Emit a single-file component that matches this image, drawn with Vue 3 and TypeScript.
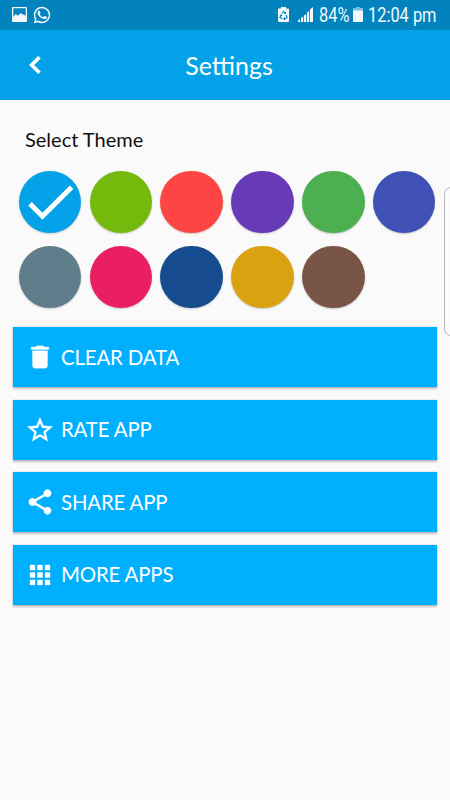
<script setup lang="ts">
import { ref } from 'vue'

interface Action {
  label: string
  path: string
}

const themes: string[] = [
  '#03a2e8', '#75b90d', '#ff4444', '#673ab7', '#4caf50', '#3f51b5',
  '#607d8b', '#e91e63', '#174b8f', '#daa210', '#795548',
]
const selected = ref(0)

const actions: Action[] = [
  { label: 'CLEAR DATA', path: 'M6 19c0 1.1.9 2 2 2h8c1.1 0 2-.9 2-2V7H6v12zM19 4h-3.5l-1-1h-5l-1 1H5v2h14V4z' },
  { label: 'RATE APP', path: 'M22 9.24l-7.19-.62L12 2 9.19 8.63 2 9.24l5.46 4.73L5.82 21 12 17.27 18.18 21l-1.63-7.03L22 9.24zM12 15.4l-3.76 2.27 1-4.28-3.32-2.88 4.38-.38L12 6.1l1.71 4.04 4.38.38-3.32 2.88 1 4.28L12 15.4z' },
  { label: 'SHARE APP', path: 'M18 16.08c-.76 0-1.44.3-1.96.77L8.91 12.7c.05-.23.09-.46.09-.7s-.04-.47-.09-.7l7.05-4.11c.54.5 1.25.81 2.04.81 1.66 0 3-1.34 3-3s-1.34-3-3-3-3 1.34-3 3c0 .24.04.47.09.7L8.04 9.81C7.5 9.31 6.79 9 6 9c-1.66 0-3 1.34-3 3s1.34 3 3 3c.79 0 1.5-.31 2.04-.81l7.12 4.16c-.05.21-.08.43-.08.65 0 1.61 1.31 2.92 2.92 2.92s2.92-1.31 2.92-2.92-1.31-2.92-2.92-2.92z' },
  { label: 'MORE APPS', path: 'M4 8h4V4H4v4zm6 12h4v-4h-4v4zm-6 0h4v-4H4v4zm0-6h4v-4H4v4zm6 0h4v-4h-4v4zm6-10v4h4V4h-4zm-6 4h4V4h-4v4zm6 6h4v-4h-4v4zm0 6h4v-4h-4v4z' },
]
</script>

<template>
  <div class="screen">
    <div class="status">
      <svg class="picture" viewBox="0 0 15 15">
        <path fill-rule="evenodd" d="M1 0h13a1 1 0 0 1 1 1v13a1 1 0 0 1-1 1H1a1 1 0 0 1-1-1V1a1 1 0 0 1 1-1zM1.3 1.3v8.4L3.8 7l2 1.8L9 6l1.8 2 1-1 1.9 2.5V1.3z" />
      </svg>
      <svg class="whatsapp" viewBox="0 0 24 24">
        <path d="M17.47 14.38c-.3-.15-1.76-.87-2.03-.97-.27-.1-.47-.15-.67.15-.2.3-.77.97-.94 1.16-.17.2-.35.22-.64.08-.3-.15-1.26-.46-2.39-1.48-.88-.79-1.48-1.76-1.65-2.06-.17-.3-.02-.46.13-.6.13-.14.3-.35.45-.52.15-.17.2-.3.3-.5.1-.2.05-.37-.03-.52-.07-.15-.67-1.61-.91-2.21-.24-.58-.49-.5-.67-.51h-.57c-.2 0-.52.07-.79.37-.27.3-1.04 1.02-1.04 2.48s1.07 2.88 1.21 3.07c.15.2 2.1 3.2 5.08 4.49 2.45.96 2.95.77 4.1.66.58-.1 1.76-.72 2-1.41.25-.7.25-1.29.18-1.42-.08-.12-.27-.2-.57-.34M12 1.1A10.9 10.9 0 0 0 2.6 17.5L1 23l5.7-1.5A10.9 10.9 0 1 0 12 1.1m0 2a8.9 8.9 0 1 1-4.9 16.3l-3.3.9.9-3.2A8.9 8.9 0 0 1 12 3.1" />
      </svg>
      <div class="status-right">
        <svg class="saver" viewBox="0 0 11 15">
          <path d="M3 0h5v1.5h2.2a.8.8 0 0 1 .8.8V14a1 1 0 0 1-1 1H1a1 1 0 0 1-1-1V2.3a.8.8 0 0 1 .8-.8H3z" />
          <path class="recycle" d="M3.8 6.5 5.5 4.5l1.7 2M8 8l1.2 2.2-1.7 1.6H6M4.5 11.8 1.9 10.5 3.1 8M6.1 6.5h1.3V5.1M7 10.6l-1.1 1.2L7 13M2 8.5l1.3-.6.6 1.2" />
        </svg>
        <svg class="signal" viewBox="0 0 15 15">
          <path d="M0 15v-1.5L2 12v3zM3 15v-4l2.2-1.5V15zM6 15V8.5L8.2 7v8zM9 15V5.5L11.2 4v11zM12 15V2.5L15 0v15z" />
        </svg>
        <span class="percent"><span class="narrow">84%</span></span>
        <svg class="battery" viewBox="0 0 10 15">
          <path opacity=".5" d="M3 0h4v1h3v3H0V1h3z" />
          <path d="M0 3.5h10V14a1 1 0 0 1-1 1H1a1 1 0 0 1-1-1z" />
        </svg>
        <span class="clock"><span class="narrow">12:04 pm</span></span>
      </div>
    </div>

    <header class="bar">
      <button class="back" aria-label="Back">
        <svg viewBox="0 0 12 18"><path d="M10.5 1.2 2.6 9l7.9 7.8" /></svg>
      </button>
      <h1>Settings</h1>
    </header>

    <main>
      <h2>Select Theme</h2>
      <div class="themes">
        <button
          v-for="(color, i) in themes"
          :key="color"
          class="swatch"
          :style="{ backgroundColor: color }"
          @click="selected = i"
        >
          <svg v-if="i === selected" viewBox="0 0 63 63"><path d="M11.1 33 23.6 45.5 53 16.3" /></svg>
        </button>
      </div>
      <div class="actions">
        <button v-for="a in actions" :key="a.label" class="action">
          <svg viewBox="0 0 24 24"><path :d="a.path" /></svg>
          <span>{{ a.label }}</span>
        </button>
      </div>
    </main>
    <div class="edge-handle"></div>
  </div>
</template>

<style>
body {
  margin: 0;
  background: #fafafa;
}
</style>

<style scoped>
.screen {
  position: relative;
  width: 450px;
  height: 800px;
  overflow: hidden;
  background: #fafafa;
  font-family: Lato, "Liberation Sans", sans-serif;
}
button {
  border: 0;
  padding: 0;
  font: inherit;
}
svg {
  display: block;
  flex: none;
}
.status {
  display: flex;
  align-items: center;
  box-sizing: border-box;
  height: 30px;
  padding: 0 13px 0 12px;
  background: #0283bd;
  color: #f2f9fd;
  font-family: Roboto, "Liberation Sans", sans-serif;
}
.status svg {
  fill: #f2f9fd;
}
.status .picture {
  width: 15px;
  height: 15px;
  margin-bottom: 1px;
}
.whatsapp {
  width: 18px;
  height: 18px;
  margin-left: 6px;
}
.status-right {
  display: flex;
  align-items: center;
  margin-left: auto;
}
.saver {
  width: 11px;
  height: 15px;
  margin-bottom: 1px;
}
.saver .recycle {
  fill: none;
  stroke: #0283bd;
  stroke-width: 1.1;
}
.signal {
  width: 15px;
  height: 15px;
  margin: 0 0 1px 9px;
}
.percent,
.clock {
  display: block;
  font-size: 20px;
  line-height: 30px;
  white-space: nowrap;
}
.percent {
  width: 30px;
  margin-left: 6px;
}
.clock {
  width: 69px;
  margin-left: 5px;
}
.narrow {
  display: inline-block;
  transform: scaleX(0.82);
  transform-origin: left;
}
.battery {
  width: 10px;
  height: 15px;
  margin: 0 0 1px 4px;
}
.bar {
  display: grid;
  grid-template-columns: 70px 1fr 70px;
  align-items: center;
  height: 70px;
  background: #03a2e8;
  color: #fff;
}
.back {
  width: 12px;
  height: 18px;
  margin: 0 0 1px 28.5px;
  background: none;
}
.back svg {
  width: 12px;
  height: 18px;
  fill: none;
  stroke: #fff;
  stroke-width: 3.6;
}
h1 {
  margin: 0 0 0 8px;
  font-size: 25px;
  font-weight: 400;
  line-height: 32px;
  text-align: center;
}
main {
  padding: 26px 13px 0;
}
h2 {
  margin: 0 0 0 12px;
  color: #111;
  font-size: 20px;
  font-weight: 400;
  line-height: 26px;
}
.themes {
  display: grid;
  grid-template-columns: repeat(6, 62.5px);
  gap: 12.5px 8.35px;
  margin: 18.5px 0 0 5.7px;
}
.swatch {
  width: 62.5px;
  height: 62.5px;
  border-radius: 50%;
  box-shadow: 0 1px 2px rgba(0, 0, 0, 0.2);
}
.swatch svg {
  width: 100%;
  height: 100%;
  fill: none;
  stroke: #fff;
  stroke-width: 5;
}
.actions {
  display: grid;
  gap: 12.5px;
  margin-top: 19px;
}
.action {
  display: flex;
  align-items: center;
  gap: 6px;
  height: 60px;
  padding-left: 12px;
  background: #00b0ff;
  box-shadow: 0 0 1px rgba(0, 0, 0, 0.35), 0 2px 2px rgba(0, 0, 0, 0.22);
  color: #fff;
  font-size: 20.4px;
  letter-spacing: -0.15px;
  line-height: 26px;
}
.action span {
  padding-bottom: 1px;
}
.action svg {
  width: 30px;
  height: 30px;
  fill: #fff;
  stroke: #fff;
  stroke-width: 0.25;
}
.edge-handle {
  position: absolute;
  top: 187px;
  left: 444px;
  width: 14px;
  height: 147px;
  border: 1px solid #b9b9b9;
  border-radius: 7px;
}
</style>
